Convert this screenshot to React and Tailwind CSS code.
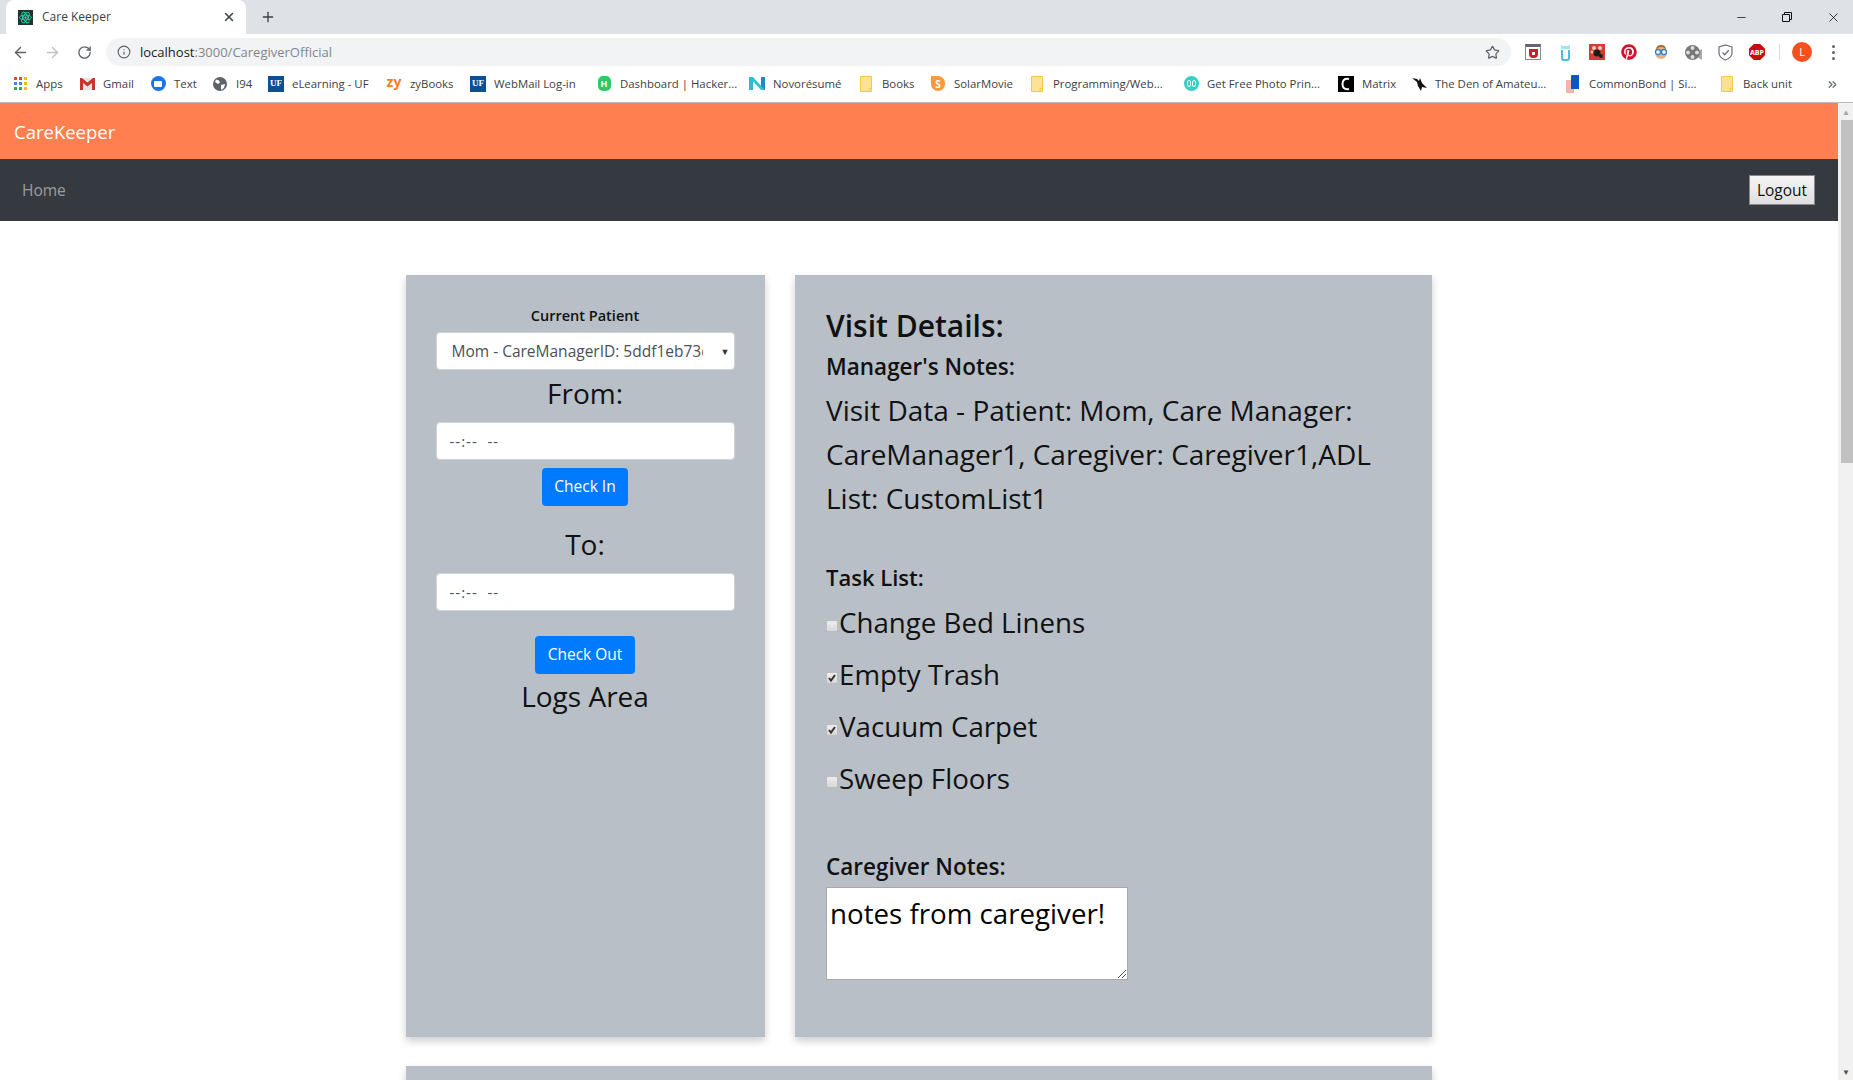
import React from 'react';
import { ArrowLeft, ArrowRight, RotateCw, Info, Star, X, Plus, Minus, ChevronsRight } from 'lucide-react';
import { FaPinterest } from 'react-icons/fa';

const uiFont = "font-['Open_Sans','Noto_Sans',sans-serif]";

const Folder = () => (
  <svg width="12" height="16" viewBox="0 0 12 16">
    <path d="M.5.5h11v15H.5z" fill="#fde293" stroke="#f2c94c" />
    <path d="M9 15.5v-3h2.5" fill="none" stroke="#f2c94c" />
  </svg>
);

const UfIcon = () => (
  <div className="w-[16px] h-[16px] bg-[#0b4f94] text-white text-[9px] font-bold font-['Liberation_Serif',serif] flex items-center justify-center leading-none">UF</div>
);

const AppsIcon = () => {
  const colors = ['#ea4335', '#ea4335', '#fbbc05', '#4285f4', '#4285f4', '#fbbc05', '#34a853', '#34a853', '#fbbc05'];
  return (
    <div className="grid grid-cols-3 gap-[2px] w-[13px] h-[13px]">
      {colors.map((c, i) => (
        <span key={i} className="w-[3px] h-[3px]" style={{ backgroundColor: c }} />
      ))}
    </div>
  );
};

const bookmarks = [
  { label: 'Apps', icon: <AppsIcon />, width: 'w-[67px]' },
  {
    label: 'Gmail',
    icon: (
      <svg width="15" height="12" viewBox="0 0 15 12">
        <path d="M0 0h15v12H0z" fill="#e4e4e4" />
        <path d="M0 0h2l5.5 4.5L13 0h2v12h-3V5L7.5 8.5 3 5v7H0z" fill="#c5372c" />
      </svg>
    ),
    width: 'w-[71px]',
  },
  {
    label: 'Text',
    icon: (
      <div className="w-[15px] h-[15px] rounded-full bg-[#1a73e8] flex items-center justify-center">
        <div className="w-[8px] h-[6px] bg-white rounded-[1px]" />
      </div>
    ),
    width: 'w-[62px]',
  },
  {
    label: 'I94',
    icon: (
      <svg width="14" height="14" viewBox="0 0 14 14">
        <circle cx="7" cy="7" r="7" fill="#5f6368" />
        <path d="M3 2.5l3 1 1 2-2 1.5-3-2zM8 8l4-1-1 4-3 2z" fill="#fff" />
      </svg>
    ),
    width: 'w-[56px]',
  },
  { label: 'eLearning - UF', icon: <UfIcon />, width: 'w-[118px]' },
  { label: 'zyBooks', icon: <span className="text-[14px] font-bold text-[#f58220] leading-none -mt-[3px]">zy</span>, width: 'w-[84px]' },
  { label: 'WebMail Log-in', icon: <UfIcon />, width: 'w-[126px]' },
  {
    label: 'Dashboard | Hacker...',
    icon: (
      <div className="w-[13px] h-[15px] bg-[#2ec866] rounded-[5px] text-white text-[9px] font-bold flex items-center justify-center leading-none">H</div>
    ),
    width: 'w-[153px]',
  },
  {
    label: 'Novorésumé',
    icon: (
      <svg width="16" height="15" viewBox="0 0 16 15">
        <path d="M0 1h4v13H0z" fill="#35b8c9" />
        <path d="M12 1h4v13h-4z" fill="#1e88c9" />
        <path d="M0 1h4l12 13h-4z" fill="#2cc4cf" />
      </svg>
    ),
    width: 'w-[109px]',
  },
  { label: 'Books', icon: <Folder />, width: 'w-[72px]' },
  {
    label: 'SolarMovie',
    icon: (
      <div className="w-[14px] h-[15px] rounded-full rounded-tl-[5px] bg-[#f79a3e] text-white text-[10px] font-bold flex items-center justify-center leading-none">S</div>
    ),
    width: 'w-[99px]',
  },
  { label: 'Programming/Web...', icon: <Folder />, width: 'w-[154px]' },
  {
    label: 'Get Free Photo Prin...',
    icon: (
      <div className="w-[15px] h-[15px] rounded-full bg-[#35cfc4] flex items-center justify-center gap-[1px]">
        <span className="w-[4px] h-[7px] rounded-full border border-white" />
        <span className="w-[4px] h-[7px] rounded-full border border-white" />
      </div>
    ),
    width: 'w-[155px]',
  },
  {
    label: 'Matrix',
    icon: (
      <svg width="16" height="16" viewBox="0 0 16 16">
        <path d="M0 0h16v16H0z" fill="#000" />
        <path d="M11 3C6 2 4.500 5 4.500 8s1.500 6 6.500 5" fill="none" stroke="#fff" strokeWidth="2" />
      </svg>
    ),
    width: 'w-[73px]',
  },
  {
    label: 'The Den of Amateu...',
    icon: (
      <svg width="15" height="14" viewBox="0 0 15 14">
        <path d="M0 1l5 1 2 2 1-3 2 5 5 5-5-1-1 4-3-5-1-4z" fill="#111" />
      </svg>
    ),
    width: 'w-[154px]',
  },
  {
    label: 'CommonBond | Si...',
    icon: (
      <svg width="14" height="18" viewBox="0 0 14 18">
        <path d="M0 5h8v13H0z" fill="#f8b4a6" />
        <path d="M5 1q0-1 1-1h7v14H5z" fill="#0b56c4" />
      </svg>
    ),
    width: 'w-[154px]',
  },
  { label: 'Back unit', icon: <Folder />, width: 'w-[84px]' },
];

const extensions = [
  <div key="mcafee" className="w-[16px] h-[16px] border border-[#888] border-t-[3px] border-t-[#667] flex items-center justify-center">
    <div className="w-[9px] h-[9px] bg-[#c8202f] rounded-b-[4px] flex items-center justify-center">
      <div className="w-[3px] h-[3px] bg-white" />
    </div>
  </div>,
  <svg key="cat" width="11" height="17" viewBox="0 0 11 17">
    <path d="M1 1l2 1h5l2-1v4H1z" fill="#9fe3f5" />
    <path d="M2 6v8q0 2 2 2h3q2 0 2-2V6" fill="none" stroke="#3fc1ea" strokeWidth="2" />
  </svg>,
  <svg key="paws" width="16" height="16" viewBox="0 0 16 16">
    <path d="M0 0h16v16H0z" fill="#d13f33" />
    <circle cx="5" cy="4" r="2" fill="#f3c9c5" />
    <circle cx="11" cy="4" r="2" fill="#f3c9c5" />
    <circle cx="3" cy="8" r="1.500" fill="#f3c9c5" />
    <circle cx="8" cy="9" r="3.500" fill="#1d1d1d" />
    <circle cx="12" cy="12" r="2" fill="#1d1d1d" />
  </svg>,
  <FaPinterest key="pin" size={16} className="text-[#d5122b]" />,
  <svg key="face" width="16" height="16" viewBox="0 0 16 16">
    <path d="M3 6q0-5 5-5t5 5z" fill="#a8692c" />
    <circle cx="8" cy="9" r="6" fill="#e9b27a" />
    <circle cx="5" cy="8" r="2.500" fill="#fff" stroke="#2f7fd0" strokeWidth="1.300" />
    <circle cx="11" cy="8" r="2.500" fill="#fff" stroke="#2f7fd0" strokeWidth="1.300" />
  </svg>,
  <svg key="reel" width="17" height="17" viewBox="0 0 17 17">
    <path d="M12 8l5-3v11l-5-3z" fill="#aaa" />
    <circle cx="7.500" cy="8.500" r="7.500" fill="#777" />
    <circle cx="7.500" cy="4" r="2" fill="#ddd" />
    <circle cx="7.500" cy="13" r="2" fill="#ddd" />
    <circle cx="3" cy="8.500" r="2" fill="#ddd" />
    <circle cx="12" cy="8.500" r="2" fill="#ddd" />
  </svg>,
  <svg key="shield" width="15" height="17" viewBox="0 0 15 17" fill="none" stroke="#6b6f74">
    <path d="M7.500 1L14 3v6q0 4.500-6.500 7Q1 13.500 1 9V3z" strokeWidth="1.200" />
    <path d="M4.500 8.500l2.200 2.200 4-4.500" strokeWidth="1.300" />
  </svg>,
  <div key="abp" className="w-[16px] h-[16px] [clip-path:polygon(30%_0,70%_0,100%_30%,100%_70%,70%_100%,30%_100%,0_70%,0_30%)] bg-[#c70d0d] text-white text-[7px] font-bold flex items-center justify-center leading-none">ABP</div>,
];

const inputBox = "w-[299px] h-[38px] bg-white border border-[#ced4da] rounded-[4px] text-[#495057]";
const blueBtn = "h-[38px] bg-[#007bff] text-white text-[15.5px] rounded-[4px] flex items-center justify-center";

const TimeInput = () => (
  <div className={`${inputBox} flex items-center pl-[13px] pt-[1px] text-[15px] tracking-[1px] whitespace-pre text-[#6b7279]`}>{'--:--  --'}</div>
);

const Task = ({ label, checked }) => (
  <div className="flex items-center h-[52px] text-[27.700px] leading-none text-[#111]">
    <span className="w-[12px] h-[12px] mt-[6px] mr-[1px] bg-gradient-to-b from-[#eeeeee] to-[#d8d8d8] border border-[#bdbdbd] rounded-[2px] flex items-center justify-center shrink-0">
      {checked && (
        <svg width="10" height="10" viewBox="0 0 10 10" fill="none" stroke="#333" strokeWidth="2">
          <path d="M2 5l2 2.500 4-5.500" />
        </svg>
      )}
    </span>
    <span>{label}</span>
  </div>
);

const App = () => {
  return (
    <div className={`${uiFont} w-[1853px] h-[1080px] overflow-hidden flex flex-col bg-white`}>
      {/* tab strip */}
      <div className="h-[34px] bg-[#dee1e6] flex items-end relative shrink-0">
        <div className="w-[240px] h-[34px] ml-[6px] bg-white rounded-t-[8px] flex items-center pl-[12px] pr-[10px]">
          <svg width="15" height="15" viewBox="0 0 15 15" fill="none" stroke="#2fd0a8" strokeWidth="0.9">
            <path d="M0 0h15v15H0z" fill="#20332f" stroke="none" />
            <ellipse cx="7.500" cy="7.500" rx="6" ry="2.400" />
            <ellipse cx="7.500" cy="7.500" rx="6" ry="2.400" transform="rotate(60 7.500 7.500)" />
            <ellipse cx="7.500" cy="7.500" rx="6" ry="2.400" transform="rotate(120 7.500 7.500)" />
            <circle cx="7.500" cy="7.500" r="1.200" fill="#2fd0a8" stroke="none" />
          </svg>
          <span className="ml-[9px] text-[12px] text-[#3c4043] flex-1">Care Keeper</span>
          <X size={14} strokeWidth={2.5} className="text-[#3c4043]" />
        </div>
        <Plus size={16} strokeWidth={2} className="ml-[14px] mb-[9px] text-[#3c4043]" />
        <div className="ml-auto h-full flex items-center text-[#111]">
          <Minus size={13} strokeWidth={1.4} className="mr-[34px]" />
          <svg width="10" height="10" viewBox="0 0 10 10" className="mr-[34px]" fill="none" stroke="#111">
            <path d="M.5 2.500h7v7h-7zM2.500 2.500v-2h7v7h-2" />
          </svg>
          <X size={15} strokeWidth={1.3} className="mr-[12px]" />
        </div>
      </div>

      {/* toolbar */}
      <div className="h-[36px] bg-white flex items-center shrink-0">
        <ArrowLeft size={17} strokeWidth={2} className="ml-[12px] text-[#5f6368]" />
        <ArrowRight size={17} strokeWidth={2} className="ml-[15px] text-[#bdc1c6]" />
        <RotateCw size={15} strokeWidth={2.2} className="ml-[16px] text-[#5f6368]" />
        <div className="ml-[14px] w-[1405px] h-[28px] bg-[#f1f3f4] rounded-full flex items-center pl-[11px] pr-[11px]">
          <Info size={14} className="text-[#5f6368]" />
          <span className="ml-[9px] mt-[1px] text-[13px] text-[#80868b]">
            <span className="text-[#202124]">localhost</span>:3000/CaregiverOfficial
          </span>
          <Star size={15} className="ml-auto text-[#5f6368]" />
        </div>
        <div className="flex items-center ml-[6px]">
          {extensions.map((ext) => (
            <div key={ext.key} className="w-[32px] flex items-center justify-center">{ext}</div>
          ))}
        </div>
        <div className="w-[1px] h-[16px] bg-[#dadce0] ml-[6px]" />
        <div className="ml-[12px] w-[20px] h-[20px] rounded-full bg-[#f4511e] text-white text-[11px] flex items-center justify-center">L</div>
        <div className="ml-[20px] flex flex-col gap-[3px]">
          <span className="w-[3px] h-[3px] rounded-full bg-[#5f6368]" />
          <span className="w-[3px] h-[3px] rounded-full bg-[#5f6368]" />
          <span className="w-[3px] h-[3px] rounded-full bg-[#5f6368]" />
        </div>
      </div>

      {/* bookmarks */}
      <div className="h-[33px] bg-white border-b border-[#b8babd] flex items-center pl-[12px] pb-[4px] shrink-0 relative">
        {bookmarks.map((b) => (
          <div key={b.label} className={`${b.width} flex items-center shrink-0`}>
            <div className="w-[16px] flex items-center justify-center shrink-0">{b.icon}</div>
            <span className="ml-[8px] text-[11.400px] text-[#3c4043] whitespace-nowrap">{b.label}</span>
          </div>
        ))}
        <ChevronsRight size={13} strokeWidth={2.5} className="absolute right-[14px] text-[#6f7377]" />
      </div>

      {/* page + scrollbar */}
      <div className="flex-1 min-h-0 flex">
        <div className="flex-1 min-w-0 overflow-hidden">
          <div className="h-[56px] bg-[#ff7f50] flex items-center pl-[14px] pt-[2px] text-[18.500px] text-white">CareKeeper</div>
          <div className="h-[62px] bg-[#343a40] flex items-center justify-between pl-[22px] pr-[23px]">
            <span className="pt-[2px] text-[15.500px] text-white/50">Home</span>
            <div className="w-[66px] h-[30px] pt-[2px] bg-gradient-to-b from-[#f5f5f5] to-[#dfdfdf] border border-[#8a8a8a] text-[15.500px] text-[#111] flex items-center justify-center">Logout</div>
          </div>

          <div className="w-[1026px] mx-auto mt-[54px]">
            <div className="flex gap-[30px]">
              <div className="w-[359px] h-[762px] bg-[#b8bfc7] shadow-[0_4px_8px_rgba(0,0,0,0.2)] flex flex-col items-center pt-[30px] pr-[1px] text-[#111]">
                <div className="text-[14.500px] font-semibold leading-[22px]">Current Patient</div>
                <div className={`${inputBox} mt-[5px] pt-[1px] flex items-center pl-[15px] relative text-[15.500px]`}>
                  <span className="w-[251px] overflow-hidden whitespace-nowrap">Mom - CareManagerID: 5ddf1eb73c</span>
                  <span className="absolute right-[4px] text-[9px] text-[#333]">▼</span>
                </div>
                <div className="text-[28px] leading-[34px] mt-[6px]">From:</div>
                <div className="mt-[12px]"><TimeInput /></div>
                <div className={`${blueBtn} w-[86px] mt-[8px]`}>Check In</div>
                <div className="text-[28px] leading-[34px] mt-[21px]">To:</div>
                <div className="mt-[12px]"><TimeInput /></div>
                <div className={`${blueBtn} w-[100px] mt-[25px]`}>Check Out</div>
                <div className="text-[28px] leading-[34px] mt-[5px]">Logs Area</div>
              </div>

              <div className="w-[637px] h-[762px] bg-[#b8bfc7] shadow-[0_4px_8px_rgba(0,0,0,0.2)] pt-[33px] px-[31px] text-[#111]">
                <div className="text-[30px] font-semibold leading-[36px]">Visit Details:</div>
                <div className="text-[22.500px] font-semibold leading-[28px] mt-[9px]">Manager's Notes:</div>
                <div className="text-[28px] leading-[44px] mt-[7px] w-[560px]">
                  Visit Data - Patient: Mom, Care Manager: CareManager1, Caregiver: Caregiver1,ADL List: CustomList1
                </div>
                <div className="text-[22px] font-semibold leading-[28px] mt-[43px]">Task List:</div>
                <div className="mt-[6px]">
                  <Task label="Change Bed Linens" />
                  <Task label="Empty Trash" checked />
                  <Task label="Vacuum Carpet" checked />
                  <Task label="Sweep Floors" />
                </div>
                <div className="text-[22.500px] font-semibold leading-[28px] mt-[48px]">Caregiver Notes:</div>
                <div className="w-[302px] h-[93px] mt-[6px] bg-white border border-[#a9a9a9] text-[27.700px] leading-[36px] text-black pl-[3px] pt-[7px] relative">
                  notes from caregiver!
                  <svg width="9" height="9" viewBox="0 0 9 9" className="absolute right-[1px] bottom-[1px]" stroke="#555" fill="none">
                    <path d="M1 9L9 1M5 9L9 5" />
                  </svg>
                </div>
              </div>
            </div>
            <div className="h-[120px] mt-[29px] bg-[#b8bfc7] shadow-[0_4px_8px_rgba(0,0,0,0.2)]" />
          </div>
        </div>

        {/* scrollbar */}
        <div className="w-[15px] bg-[#f1f1f1] flex flex-col items-end shrink-0">
          <div className="w-[14px] h-[17px] flex items-center justify-center text-[8px] text-[#a3a3a3]">▲</div>
          <div className="w-[12px] h-[343px] bg-[#c1c1c1]" />
          <div className="mt-auto w-[14px] h-[17px] flex items-center justify-center text-[8px] text-[#505050]">▼</div>
        </div>
      </div>
    </div>
  );
};

export default App;
